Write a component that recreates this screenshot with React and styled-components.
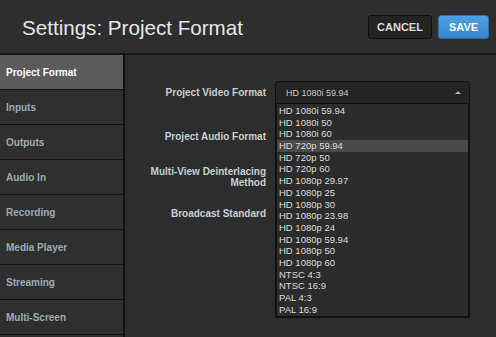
import React, { useState } from 'react'
import styled, { createGlobalStyle } from 'styled-components'

const GlobalStyle = createGlobalStyle`
  html, body {
    margin: 0;
    padding: 0;
    background: #2d2d2d;
    font-family: "Liberation Sans", Arial, sans-serif;
  }
`

const Page = styled.div`
  width: 496px;
  height: 337px;
  overflow: hidden;
  background: #2d2d2d;
  display: flex;
  flex-direction: column;
`

const Header = styled.header`
  height: 55px;
  flex: none;
  display: flex;
  align-items: center;
  justify-content: space-between;
  padding: 0 7px 0 22px;
  box-sizing: border-box;
  border-bottom: 2px solid #161616;
  background: #2e2e2e;
`

const Title = styled.h1`
  margin: 0;
  margin-top: 2px;
  font-size: 20.6px;
  font-weight: normal;
  color: #e6e6e6;
`

const Buttons = styled.div`
  display: flex;
  gap: 6px;
  margin-top: 1px;
`

const Button = styled.button`
  height: 24px;
  width: ${p => p.$w}px;
  border-radius: 3px;
  font-family: "Liberation Sans", Arial, sans-serif;
  font-size: 11px;
  font-weight: bold;
  padding: 0;
  cursor: pointer;
  color: ${p => (p.$primary ? '#ffffff' : '#dcdcdc')};
  background: ${p => (p.$primary ? 'linear-gradient(#4ea0e4, #3685cc)' : '#232323')};
  border: 1px solid ${p => (p.$primary ? '#2f6fa8' : '#0f0f0f')};
`

const Body = styled.div`
  flex: 1;
  display: flex;
  min-height: 0;
`

const Sidebar = styled.nav`
  width: 123px;
  flex: none;
  border-right: 2px solid #111;
  display: flex;
  flex-direction: column;
`

const NavItem = styled.div`
  height: 34px;
  flex: none;
  display: flex;
  align-items: center;
  padding-left: 6px;
  font-size: 10px;
  font-weight: bold;
  border-bottom: 1px solid #141414;
  color: ${p => (p.$active ? '#ffffff' : '#9eaab6')};
  background: ${p => (p.$active ? '#5b5b5b' : '#2f2f2f')};
`

const Content = styled.section`
  flex: 1;
  padding-top: 26px;
  background: #2d2d2d;
`

const Row = styled.div`
  display: grid;
  grid-template-columns: 141px 195px;
  column-gap: 9px;
  align-items: center;
  min-height: 23px;
  margin-top: ${p => p.$gap || 0}px;
  position: relative;
  z-index: ${p => (p.$open ? 2 : 1)};
`

const Label = styled.label`
  text-align: right;
  font-size: 10px;
  font-weight: bold;
  line-height: 11px;
  color: #c6cfd8;
`

const SelectWrap = styled.div`
  position: relative;
`

const SelectBox = styled.div`
  height: 23px;
  box-sizing: border-box;
  border: 1px solid #121212;
  border-radius: 3px 3px ${p => (p.$open ? '0 0' : '3px 3px')};
  background: #242424;
  display: flex;
  align-items: center;
  justify-content: space-between;
  padding: 0 8px 0 10px;
  font-size: 9px;
  color: #c8c8c8;
`

const Arrow = styled.span`
  width: 0;
  height: 0;
  border-left: 3px solid transparent;
  border-right: 3px solid transparent;
  border-bottom: 3px solid #b5b5b5;
`

const List = styled.ul`
  position: absolute;
  top: 100%;
  left: 0;
  width: 195px;
  box-sizing: border-box;
  margin: 0;
  padding: 1px 0 1px;
  list-style: none;
  background: #2c2c2c;
  border: 2px solid #111;
  border-top: none;
`

const Option = styled.li`
  height: 11.7px;
  line-height: 11.7px;
  padding-left: 2px;
  font-size: 9.5px;
  color: #dcdcdc;
  background: ${p => (p.$hover ? '#4a4a4a' : 'transparent')};
  white-space: nowrap;
`

const navItems = [
  'Project Format',
  'Inputs',
  'Outputs',
  'Audio In',
  'Recording',
  'Media Player',
  'Streaming',
  'Multi-Screen',
]

const videoFormats = [
  'HD 1080i 59.94',
  'HD 1080i 50',
  'HD 1080i 60',
  'HD 720p 59.94',
  'HD 720p 50',
  'HD 720p 60',
  'HD 1080p 29.97',
  'HD 1080p 25',
  'HD 1080p 30',
  'HD 1080p 23.98',
  'HD 1080p 24',
  'HD 1080p 59.94',
  'HD 1080p 50',
  'HD 1080p 60',
  'NTSC 4:3',
  'NTSC 16:9',
  'PAL 4:3',
  'PAL 16:9',
]

// selects under the open list are covered, so they render without text
const Select = ({ value, options, open, hover }) => (
  <SelectWrap>
    <SelectBox $open={open}>
      <span>{value}</span>
      {open ? <Arrow /> : null}
    </SelectBox>
    {open ? (
      <List>
        {options.map(o => (
          <Option key={o} $hover={o === hover}>{o}</Option>
        ))}
      </List>
    ) : null}
  </SelectWrap>
)

const App = () => {
  const [active] = useState('Project Format')

  return (
    <Page>
      <GlobalStyle />
      <Header>
        <Title>Settings: Project Format</Title>
        <Buttons>
          <Button $w={64}>CANCEL</Button>
          <Button $w={51} $primary>SAVE</Button>
        </Buttons>
      </Header>
      <Body>
        <Sidebar>
          {navItems.map(n => (
            <NavItem key={n} $active={n === active}>{n}</NavItem>
          ))}
        </Sidebar>
        <Content>
          <Row $open>
            <Label>Project Video Format</Label>
            <Select value="HD 1080i 59.94" options={videoFormats} open hover="HD 720p 59.94" />
          </Row>
          <Row $gap={21}>
            <Label>Project Audio Format</Label>
            <Select />
          </Row>
          <Row $gap={17.5}>
            <Label>Multi-View Deinterlacing<br />Method</Label>
            <Select />
          </Row>
          <Row $gap={13}>
            <Label>Broadcast Standard</Label>
            <Select />
          </Row>
        </Content>
      </Body>
    </Page>
  )
}

export default App
